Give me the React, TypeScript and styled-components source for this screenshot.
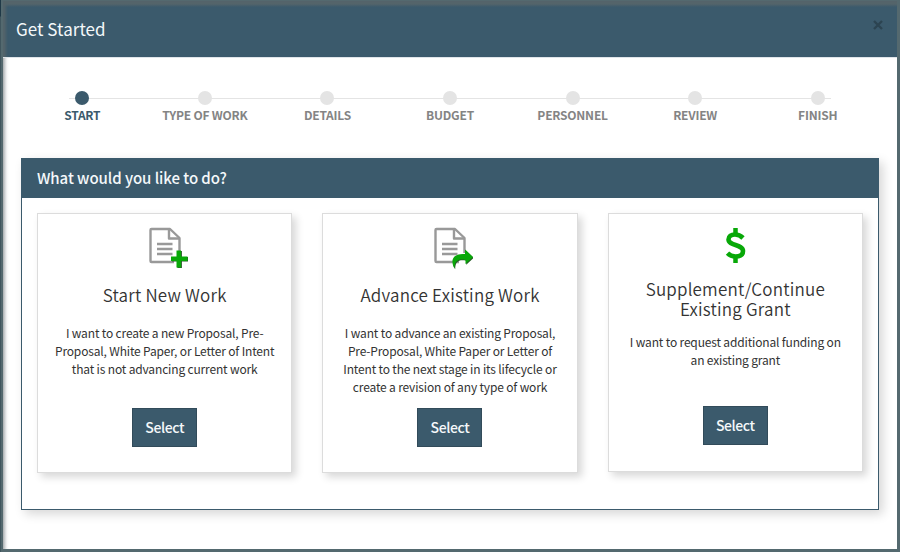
import React from 'react';
import styled, { createGlobalStyle } from 'styled-components';

const teal = '#3b5a6c';

const GlobalStyle = createGlobalStyle`
  * { box-sizing: border-box; }
  body { margin: 0; overflow: hidden; background: #3c5159; }
  body, button { font-family: "Noto Sans CJK SC", "Noto Sans", sans-serif; }
`;

const Backdrop = styled.div`
  height: 552px;
  padding: 0 0 0 1px;
  background: linear-gradient(#1f3947 0 16px, #40565e 17px);
`;

const Dialog = styled.main`
  height: 552px;
  border: solid #54696f;
  border-width: 1px 3px 3px 2px;
  background: #fff;
`;

const DialogHeader = styled.header`
  display: flex;
  justify-content: space-between;
  height: 57px;
  padding: 0 14px 0 13px;
  border-bottom: 1px solid #dfe5e9;
  background: linear-gradient(#54646a 0, #54646a 3px, ${teal} 6px);
  box-shadow: inset 5px 0 3px -2px #54646a;
`;

const DialogTitle = styled.h1`
  margin: 0;
  color: #f4f8fa;
  font-size: 17px;
  font-weight: 400;
  line-height: 56px;
  letter-spacing: 0.05px;
`;

const CloseButton = styled.button`
  display: flex;
  height: 10px;
  margin-top: 19px;
  padding: 0;
  border: 0;
  background: none;
`;

const DialogBody = styled.div`
  height: 491px;
  padding: 33px 18px 0;
  background: linear-gradient(90deg, #a9adaf 0, #d3d6d8 2px, #f6f6f7 4px, #fff 6px);
`;

const Steps = styled.ol`
  display: grid;
  grid-template-columns: repeat(7, 1fr);
  width: 858px;
  height: 67px;
  margin: 0;
  padding: 0;
  list-style: none;
  background: linear-gradient(#e4e4e4, #e4e4e4) 48px 7px / 762px 1px no-repeat;
`;

const Step = styled.li<{ $active?: boolean }>`
  display: flex;
  flex-direction: column;
  align-items: center;
  color: ${(p) => (p.$active ? teal : '#848484')};
  font-size: 12px;
  font-weight: 700;
  line-height: 18px;
  letter-spacing: -0.22px;
  white-space: nowrap;

  &::before {
    content: '';
    width: 14px;
    height: 14px;
    margin-bottom: 1px;
    border-radius: 50%;
    background: ${(p) => (p.$active ? teal : '#e4e4e4')};
  }
`;

const Panel = styled.section`
  width: 858px;
  height: 352px;
  border: 1px solid ${teal};
  background: #fff;
  box-shadow: 4px 4px 10px rgba(0, 0, 0, 0.16);
`;

const PanelTitle = styled.h2`
  height: 39px;
  margin: 0;
  padding-left: 15px;
  background: ${teal};
  color: #f4f8fa;
  font-size: 15px;
  font-weight: 500;
  line-height: 37px;
  letter-spacing: -0.06px;
`;

const Cards = styled.div`
  display: grid;
  grid-template-columns: repeat(3, 1fr);
  align-items: start;
  gap: 30px;
  padding: 15px;
`;

const Card = styled.article<{ $height: number }>`
  display: flex;
  flex-direction: column;
  align-items: center;
  height: ${(p) => p.$height}px;
  padding-top: 13px;
  border: 1px solid #dcdcdc;
  background: #fff;
  box-shadow: 4px 4px 8px rgba(0, 0, 0, 0.16);
`;

const CardTitle = styled.h3`
  margin: 15px 0 0;
  color: #333;
  font-size: 17px;
  font-weight: 350;
  line-height: 20px;
  letter-spacing: 0.2px;
  text-align: center;
  white-space: pre;
`;

const Description = styled.p<{ $top: number; $height: number }>`
  height: ${(p) => p.$height}px;
  margin: ${(p) => p.$top}px 0 0;
  color: #333;
  font-size: 12px;
  line-height: 18px;
  letter-spacing: -0.16px;
  text-align: center;
  white-space: pre;
`;

const SelectButton = styled.button`
  width: 65px;
  height: 39px;
  padding: 0;
  border: 1px solid #324b5a;
  background: ${teal};
  color: #f4f8fa;
  font-size: 14px;
  font-weight: 500;
  line-height: 37px;
  letter-spacing: -0.4px;
`;

const Doc = () => (
  <g fill="none" stroke="#999" strokeWidth="2.400" strokeLinejoin="round">
    <path d="M28.500 35H6a1 1 0 0 1-1-1V3a1 1 0 0 1 1-1h18.500l9.500 9V26" />
    <path d="M23.500 2v9.500H34" />
    <path d="M11.500 17h15.500M11.500 22h15.500M11.500 27h15.500" />
  </g>
);

const NewIcon = () => (
  <svg width="46" height="43" viewBox="0 0 39 43" preserveAspectRatio="xMidYMin">
    <Doc />
    <path d="M31 23.500h4.500v6H42v4.500h-6.500v6.500H31V34h-5.500v-4.500H31z" fill="#245b24" transform="translate(.9 .6)" />
    <path d="M31 23.500h4.500v6H42v4.500h-6.500v6.500H31V34h-5.500v-4.500H31z" fill="#08a808" />
  </svg>
);

const AdvanceIcon = () => (
  <svg width="46" height="43" viewBox="0 0 39 43" preserveAspectRatio="xMidYMin">
    <Doc />
    <path d="M34.500 22.500 42.500 30 35 37v-4c-7-1.500-11 .5-11 8.500-4.500-7.500-2-15.500 10.500-14.500z" fill="#245b24" transform="translate(.7 .8)" />
    <path d="M34.500 22.500 42.500 30 35 37v-4c-7-1.500-11 .5-11 8.500-4.500-7.500-2-15.500 10.500-14.500z" fill="#08a808" />
  </svg>
);

const DollarIcon = () => (
  <svg width="46" height="37" viewBox="0 0 46 37">
    <path d="M23.500 1v6M23.500 30v6" stroke="#08a808" strokeWidth="4.500" />
    <path d="M31 11C28 8 25.500 7.500 23 7.500c-4 0-6.500 2-6.500 5 0 6.500 14.500 4.500 14.500 11.500 0 3.700-3 5.500-7.500 5.500-3.500 0-6-1.200-8-3.300" fill="none" stroke="#08a808" strokeWidth="4.600" />
  </svg>
);

const steps = ['START', 'TYPE OF WORK', 'DETAILS', 'BUDGET', 'PERSONNEL', 'REVIEW', 'FINISH'];

const options = [
  {
    icon: <NewIcon />,
    title: 'Start New Work',
    text: 'I want to create a new Proposal, Pre-\nProposal, White Paper, or Letter of Intent\nthat is not advancing current work',
    textTop: 19,
    textHeight: 84,
    height: 260,
  },
  {
    icon: <AdvanceIcon />,
    title: 'Advance Existing Work',
    text: 'I want to advance an existing Proposal,\nPre-Proposal, White Paper or Letter of\nIntent to the next stage in its lifecycle or\ncreate a revision of any type of work',
    textTop: 19,
    textHeight: 84,
    height: 260,
  },
  {
    icon: <DollarIcon />,
    title: 'Supplement/Continue\nExisting Grant',
    text: 'I want to request additional funding on\nan existing grant',
    textTop: 14,
    textHeight: 73,
    height: 259,
  },
];

export default function App() {
  return (
    <Backdrop>
      <GlobalStyle />
      <Dialog>
        <DialogHeader>
          <DialogTitle>Get Started</DialogTitle>
          <CloseButton aria-label="Close">
            <svg width="10" height="10" viewBox="0 0 10 10">
              <path d="M1 1l8 8M9 1L1 9" stroke="#2c4451" strokeWidth="2.300" />
            </svg>
          </CloseButton>
        </DialogHeader>
        <DialogBody>
          <Steps>
            {steps.map((s, i) => (
              <Step key={s} $active={i === 0}>{s}</Step>
            ))}
          </Steps>
          <Panel>
            <PanelTitle>What would you like to do?</PanelTitle>
            <Cards>
              {options.map((o) => (
                <Card key={o.title} $height={o.height}>
                  {o.icon}
                  <CardTitle>{o.title}</CardTitle>
                  <Description $top={o.textTop} $height={o.textHeight}>{o.text}</Description>
                  <SelectButton>Select</SelectButton>
                </Card>
              ))}
            </Cards>
          </Panel>
        </DialogBody>
      </Dialog>
    </Backdrop>
  );
}
